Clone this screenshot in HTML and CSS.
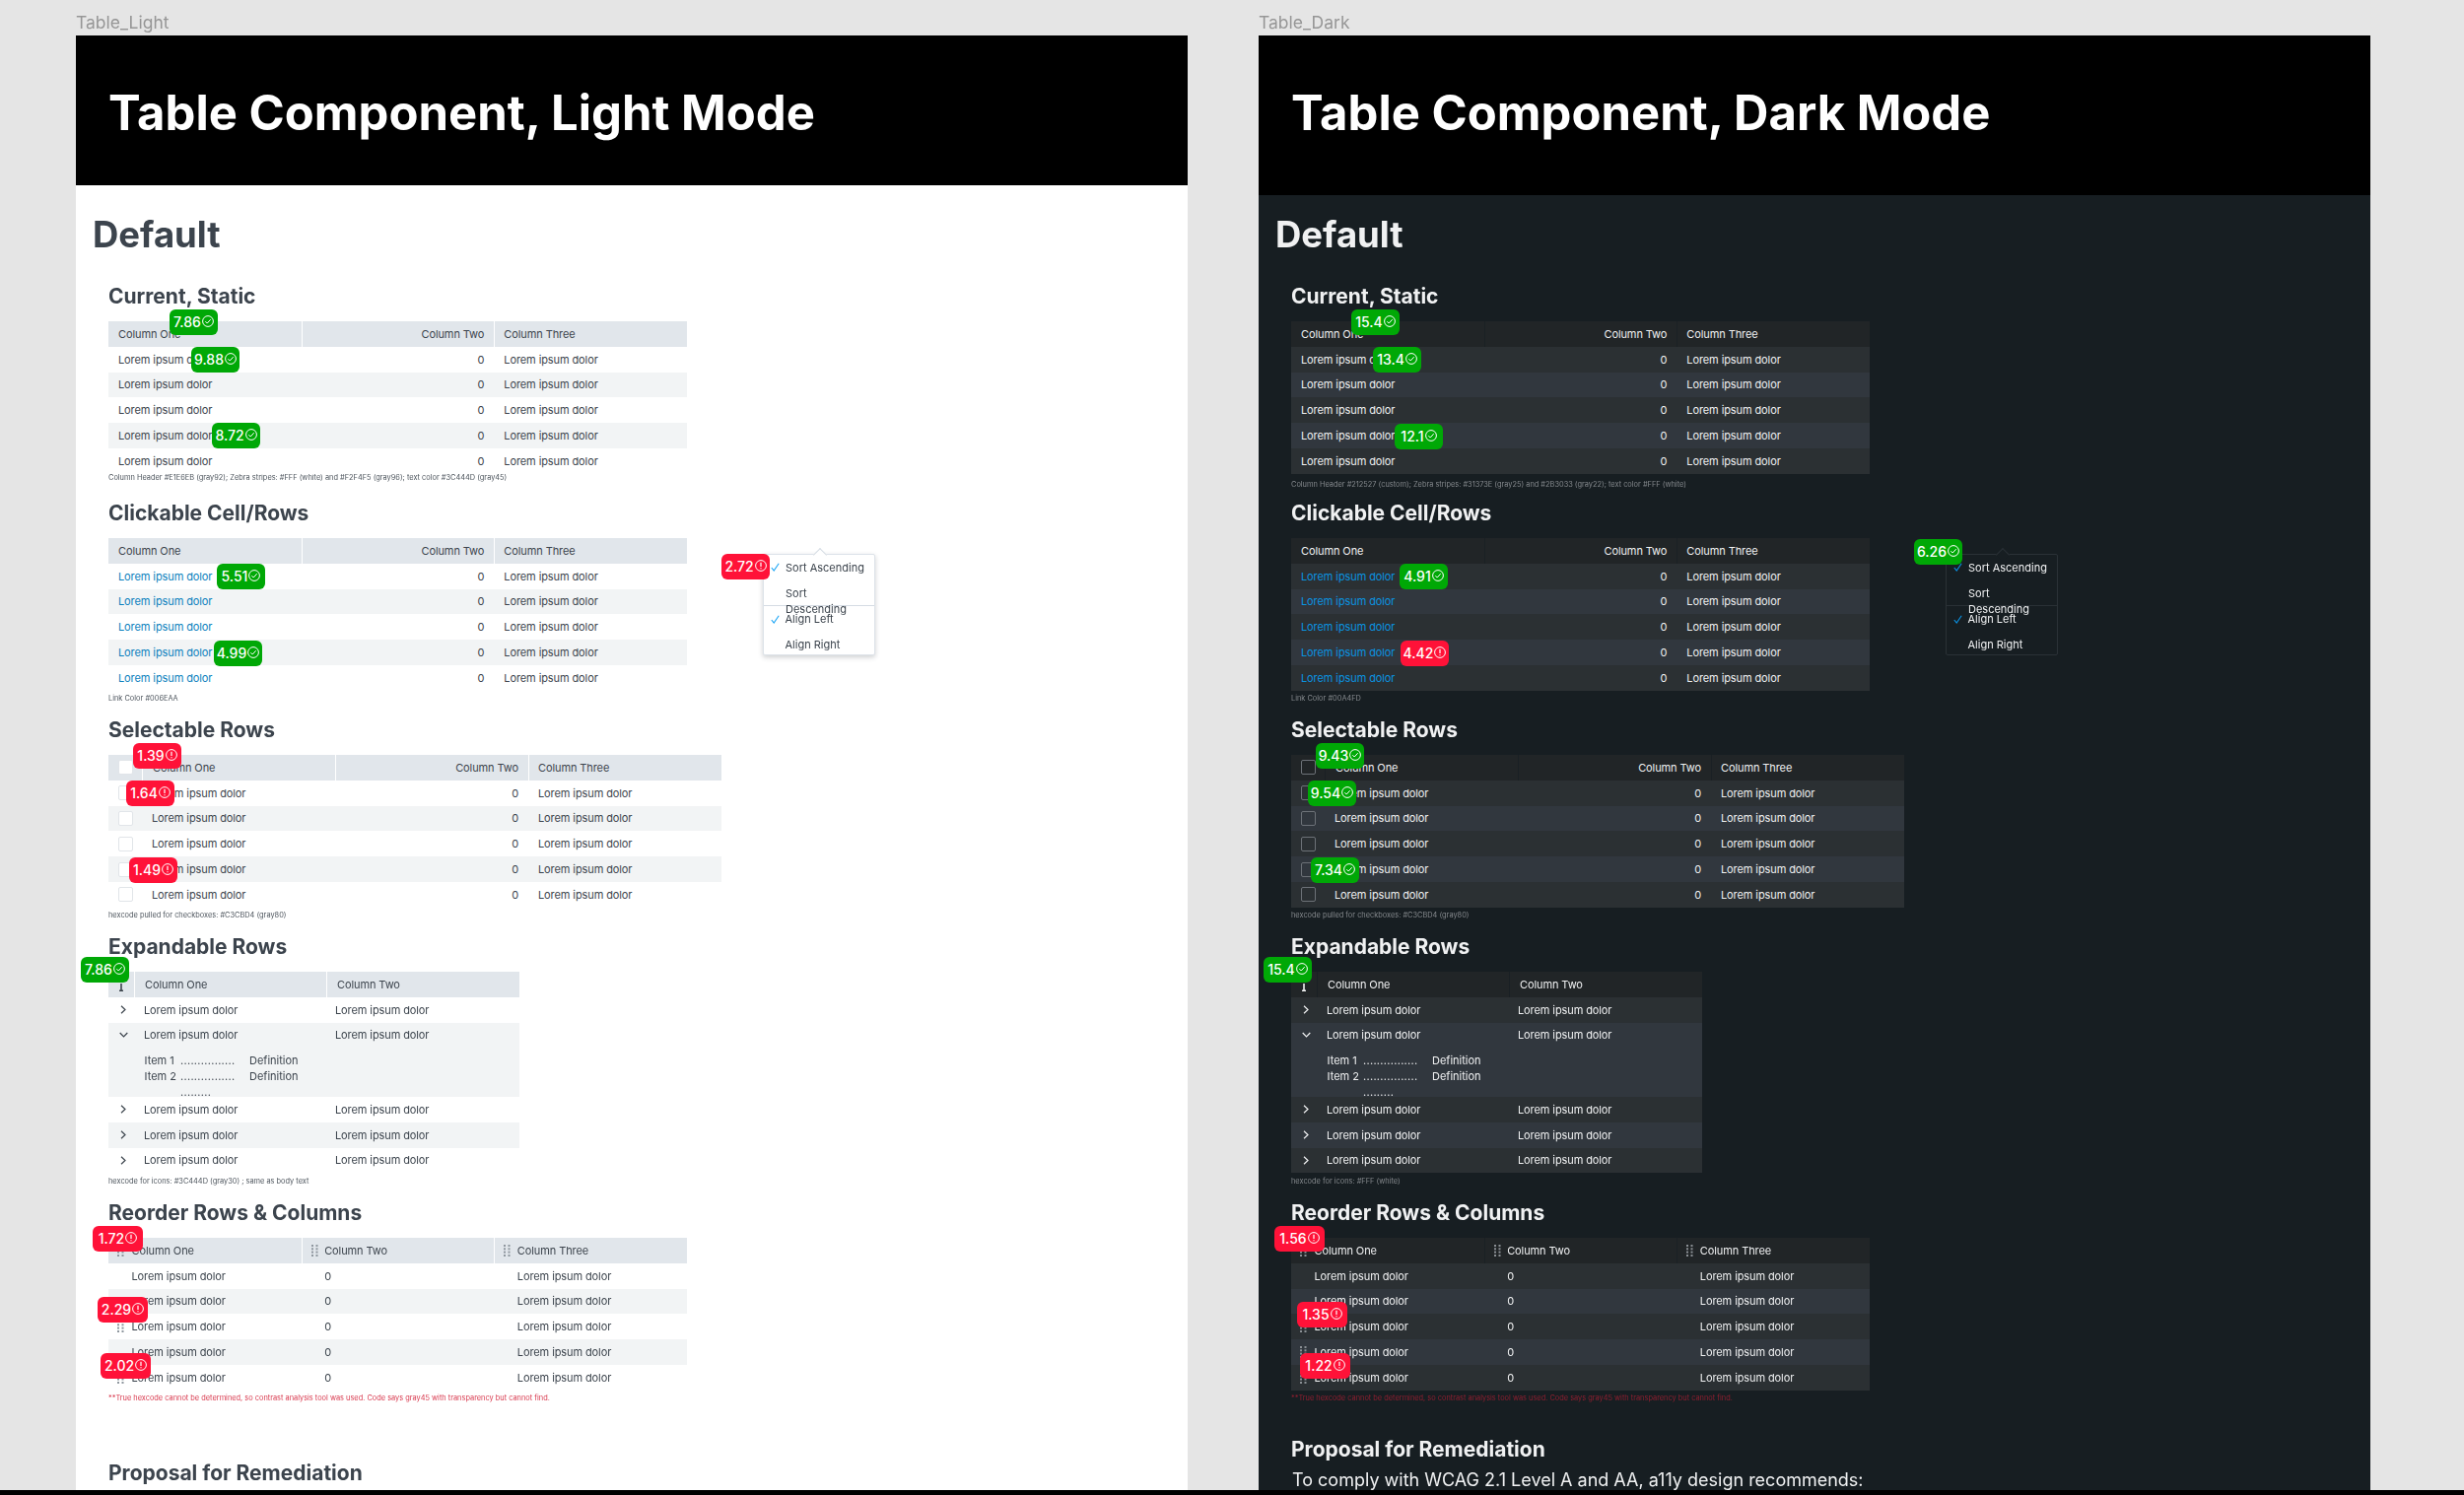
FILE: index.html
```html
<!DOCTYPE html>
<html lang="en">
<head>
<meta charset="utf-8">
<title>Table Component</title>
<link rel="stylesheet" href="styles.css">
</head>
<body>
<svg class="defs" width="0" height="0" aria-hidden="true">
  <symbol id="ok" viewBox="0 0 12 12"><circle cx="6" cy="6" r="5.4" fill="none" stroke="currentColor"/><path d="M3.4 6.2 5.2 8 8.7 4.2" fill="none" stroke="currentColor"/></symbol>
  <symbol id="bad" viewBox="0 0 12 12"><circle cx="6" cy="6" r="5.4" fill="none" stroke="currentColor"/><path d="M6 2.8V7M6 8.2V9.2" fill="none" stroke="currentColor" stroke-width="1.2"/></symbol>
  <symbol id="grip" viewBox="0 0 7 12"><g fill="currentColor"><rect x="0" y="0" width="2" height="2"/><rect x="4.5" y="0" width="2" height="2"/><rect x="0" y="3.3" width="2" height="2"/><rect x="4.5" y="3.3" width="2" height="2"/><rect x="0" y="6.6" width="2" height="2"/><rect x="4.5" y="6.6" width="2" height="2"/><rect x="0" y="10" width="2" height="2"/><rect x="4.5" y="10" width="2" height="2"/></g></symbol>
  <symbol id="right" viewBox="0 0 6 9"><path d="M1 .7 5 4.5 1 8.3" fill="none" stroke="currentColor" stroke-width="1.2"/></symbol>
  <symbol id="down" viewBox="0 0 9 6"><path d="M.7 1 4.5 5 8.3 1" fill="none" stroke="currentColor" stroke-width="1.2"/></symbol>
  <symbol id="tick" viewBox="0 0 9 9"><path d="M.8 5 3.2 8 8.2 .8" fill="none" stroke="currentColor" stroke-width="1.1"/></symbol>
  <symbol id="stem" viewBox="0 0 6 8"><path d="M3 0V7M1 7.3H5" fill="none" stroke="currentColor" stroke-width="1.6"/></symbol>
</svg>

<main class="canvas">

  <section class="board">
    <div class="board-label">Table_Light</div>
    <div class="frame light">
      <header class="banner"><h1 class="banner-title">Table Component, Light Mode</h1></header>
      <div class="content">
        <h2 class="page-title">Default</h2>

        <section class="sec">
          <h3 class="sec-title">Current, Static</h3>
          <div class="tbl t-three">
            <div class="row head"><div class="c">Column One</div><div class="c num">Column Two</div><div class="c">Column Three</div></div>
            <div class="row"><div class="c">Lorem ipsum dolor</div><div class="c num">0</div><div class="c">Lorem ipsum dolor</div></div>
            <div class="row alt"><div class="c">Lorem ipsum dolor</div><div class="c num">0</div><div class="c">Lorem ipsum dolor</div></div>
            <div class="row"><div class="c">Lorem ipsum dolor</div><div class="c num">0</div><div class="c">Lorem ipsum dolor</div></div>
            <div class="row alt"><div class="c">Lorem ipsum dolor</div><div class="c num">0</div><div class="c">Lorem ipsum dolor</div></div>
            <div class="row"><div class="c">Lorem ipsum dolor</div><div class="c num">0</div><div class="c">Lorem ipsum dolor</div></div>
          </div>
          <p class="note note-tight">Column Header #E1E6EB (gray92); Zebra stripes: #FFF (white) and #F2F4F5 (gray96); text color #3C444D (gray45)</p>
        </section>

        <section class="sec">
          <h3 class="sec-title">Clickable Cell/Rows</h3>
          <div class="tbl t-three">
            <div class="row head"><div class="c">Column One</div><div class="c num">Column Two</div><div class="c">Column Three</div></div>
            <div class="row"><div class="c"><a class="lnk">Lorem ipsum dolor</a></div><div class="c num">0</div><div class="c">Lorem ipsum dolor</div></div>
            <div class="row alt"><div class="c"><a class="lnk">Lorem ipsum dolor</a></div><div class="c num">0</div><div class="c">Lorem ipsum dolor</div></div>
            <div class="row"><div class="c"><a class="lnk">Lorem ipsum dolor</a></div><div class="c num">0</div><div class="c">Lorem ipsum dolor</div></div>
            <div class="row alt"><div class="c"><a class="lnk">Lorem ipsum dolor</a></div><div class="c num">0</div><div class="c">Lorem ipsum dolor</div></div>
            <div class="row"><div class="c"><a class="lnk">Lorem ipsum dolor</a></div><div class="c num">0</div><div class="c">Lorem ipsum dolor</div></div>
          </div>
          <p class="note">Link Color #006EAA</p>
        </section>

        <section class="sec">
          <h3 class="sec-title">Selectable Rows</h3>
          <div class="tbl t-select">
            <div class="row head"><div class="c box-cell"><span class="box"></span></div><div class="c">Column One</div><div class="c num">Column Two</div><div class="c">Column Three</div></div>
            <div class="row"><div class="c box-cell"><span class="box"></span></div><div class="c">Lorem ipsum dolor</div><div class="c num">0</div><div class="c">Lorem ipsum dolor</div></div>
            <div class="row alt"><div class="c box-cell"><span class="box"></span></div><div class="c">Lorem ipsum dolor</div><div class="c num">0</div><div class="c">Lorem ipsum dolor</div></div>
            <div class="row"><div class="c box-cell"><span class="box"></span></div><div class="c">Lorem ipsum dolor</div><div class="c num">0</div><div class="c">Lorem ipsum dolor</div></div>
            <div class="row alt"><div class="c box-cell"><span class="box"></span></div><div class="c">Lorem ipsum dolor</div><div class="c num">0</div><div class="c">Lorem ipsum dolor</div></div>
            <div class="row"><div class="c box-cell"><span class="box"></span></div><div class="c">Lorem ipsum dolor</div><div class="c num">0</div><div class="c">Lorem ipsum dolor</div></div>
          </div>
          <p class="note">hexcode pulled for checkboxes: #C3CBD4 (gray80)</p>
        </section>

        <section class="sec">
          <h3 class="sec-title">Expandable Rows</h3>
          <div class="tbl t-expand">
            <div class="row head"><div class="c icon-cell"><svg class="stem"><use href="#stem"/></svg></div><div class="c">Column One</div><div class="c">Column Two</div></div>
            <div class="row"><div class="c icon-cell"><svg class="chev-r"><use href="#right"/></svg></div><div class="c">Lorem ipsum dolor</div><div class="c cell-tight">Lorem ipsum dolor</div></div>
            <div class="expanded">
              <div class="row alt"><div class="c icon-cell"><svg class="chev-d"><use href="#down"/></svg></div><div class="c">Lorem ipsum dolor</div><div class="c cell-tight">Lorem ipsum dolor</div></div>
              <dl class="defs-list">
                <dt>Item 1</dt><dd class="dots">................</dd><dd>Definition</dd>
                <dt>Item 2</dt><dd class="dots">................<br>.........</dd><dd>Definition</dd>
              </dl>
            </div>
            <div class="row"><div class="c icon-cell"><svg class="chev-r"><use href="#right"/></svg></div><div class="c">Lorem ipsum dolor</div><div class="c cell-tight">Lorem ipsum dolor</div></div>
            <div class="row alt"><div class="c icon-cell"><svg class="chev-r"><use href="#right"/></svg></div><div class="c">Lorem ipsum dolor</div><div class="c cell-tight">Lorem ipsum dolor</div></div>
            <div class="row"><div class="c icon-cell"><svg class="chev-r"><use href="#right"/></svg></div><div class="c">Lorem ipsum dolor</div><div class="c cell-tight">Lorem ipsum dolor</div></div>
          </div>
          <p class="note">hexcode for icons: #3C444D (gray30) ; same as body text</p>
        </section>

        <section class="sec sec-reorder">
          <h3 class="sec-title">Reorder Rows &amp; Columns</h3>
          <div class="tbl t-three t-reorder">
            <div class="row head"><div class="c"><svg class="grip"><use href="#grip"/></svg>Column One</div><div class="c"><svg class="grip"><use href="#grip"/></svg>Column Two</div><div class="c"><svg class="grip"><use href="#grip"/></svg>Column Three</div></div>
            <div class="row"><div class="c">Lorem ipsum dolor</div><div class="c">0</div><div class="c">Lorem ipsum dolor</div></div>
            <div class="row alt"><div class="c">Lorem ipsum dolor</div><div class="c">0</div><div class="c">Lorem ipsum dolor</div></div>
            <div class="row"><div class="c"><svg class="grip"><use href="#grip"/></svg>Lorem ipsum dolor</div><div class="c">0</div><div class="c">Lorem ipsum dolor</div></div>
            <div class="row alt"><div class="c">Lorem ipsum dolor</div><div class="c">0</div><div class="c">Lorem ipsum dolor</div></div>
            <div class="row"><div class="c"><svg class="grip"><use href="#grip"/></svg>Lorem ipsum dolor</div><div class="c">0</div><div class="c">Lorem ipsum dolor</div></div>
          </div>
          <p class="note note-red">**True hexcode cannot be determined, so contrast analysis tool was used. Code says gray45 with transparency but cannot find.</p>
        </section>

        <section class="sec-last">
          <h3 class="sec-title">Proposal for Remediation</h3>
        </section>
      </div>

      <div class="menu">
        <div class="menu-group">
          <div class="menu-item"><svg class="tick"><use href="#tick"/></svg><span>Sort Ascending</span></div>
          <div class="menu-item"><span class="menu-slot"></span><span>Sort Descending</span></div>
        </div>
        <div class="menu-group menu-group-b">
          <div class="menu-item"><svg class="tick"><use href="#tick"/></svg><span>Align Left</span></div>
          <div class="menu-item"><span class="menu-slot"></span><span>Align Right</span></div>
        </div>
      </div>

      <div class="badge pass l1">7.86<svg class="b-icon"><use href="#ok"/></svg></div>
      <div class="badge pass l2">9.88<svg class="b-icon"><use href="#ok"/></svg></div>
      <div class="badge pass l3">8.72<svg class="b-icon"><use href="#ok"/></svg></div>
      <div class="badge pass l4">5.51<svg class="b-icon"><use href="#ok"/></svg></div>
      <div class="badge pass l5">4.99<svg class="b-icon"><use href="#ok"/></svg></div>
      <div class="badge fail l6">2.72<svg class="b-icon"><use href="#bad"/></svg></div>
      <div class="badge fail l7">1.39<svg class="b-icon"><use href="#bad"/></svg></div>
      <div class="badge fail l8">1.64<svg class="b-icon"><use href="#bad"/></svg></div>
      <div class="badge fail l9">1.49<svg class="b-icon"><use href="#bad"/></svg></div>
      <div class="badge pass l10">7.86<svg class="b-icon"><use href="#ok"/></svg></div>
      <div class="badge fail wide l11">1.72<svg class="b-icon"><use href="#bad"/></svg></div>
      <div class="badge fail wide l12">2.29<svg class="b-icon"><use href="#bad"/></svg></div>
      <div class="badge fail wide l13">2.02<svg class="b-icon"><use href="#bad"/></svg></div>
    </div>
  </section>

  <section class="board">
    <div class="board-label">Table_Dark</div>
    <div class="frame dark">
      <header class="banner"><h1 class="banner-title">Table Component, Dark Mode</h1></header>
      <div class="content">
        <h2 class="page-title">Default</h2>

        <section class="sec">
          <h3 class="sec-title">Current, Static</h3>
          <div class="tbl t-three">
            <div class="row head"><div class="c">Column One</div><div class="c num">Column Two</div><div class="c">Column Three</div></div>
            <div class="row"><div class="c">Lorem ipsum dolor</div><div class="c num">0</div><div class="c">Lorem ipsum dolor</div></div>
            <div class="row alt"><div class="c">Lorem ipsum dolor</div><div class="c num">0</div><div class="c">Lorem ipsum dolor</div></div>
            <div class="row"><div class="c">Lorem ipsum dolor</div><div class="c num">0</div><div class="c">Lorem ipsum dolor</div></div>
            <div class="row alt"><div class="c">Lorem ipsum dolor</div><div class="c num">0</div><div class="c">Lorem ipsum dolor</div></div>
            <div class="row"><div class="c">Lorem ipsum dolor</div><div class="c num">0</div><div class="c">Lorem ipsum dolor</div></div>
          </div>
          <p class="note">Column Header #212527 (custom); Zebra stripes: #31373E (gray25) and #2B3033 (gray22); text color #FFF (white)</p>
        </section>

        <section class="sec">
          <h3 class="sec-title">Clickable Cell/Rows</h3>
          <div class="tbl t-three">
            <div class="row head"><div class="c">Column One</div><div class="c num">Column Two</div><div class="c">Column Three</div></div>
            <div class="row"><div class="c"><a class="lnk">Lorem ipsum dolor</a></div><div class="c num">0</div><div class="c">Lorem ipsum dolor</div></div>
            <div class="row alt"><div class="c"><a class="lnk">Lorem ipsum dolor</a></div><div class="c num">0</div><div class="c">Lorem ipsum dolor</div></div>
            <div class="row"><div class="c"><a class="lnk">Lorem ipsum dolor</a></div><div class="c num">0</div><div class="c">Lorem ipsum dolor</div></div>
            <div class="row alt"><div class="c"><a class="lnk">Lorem ipsum dolor</a></div><div class="c num">0</div><div class="c">Lorem ipsum dolor</div></div>
            <div class="row"><div class="c"><a class="lnk">Lorem ipsum dolor</a></div><div class="c num">0</div><div class="c">Lorem ipsum dolor</div></div>
          </div>
          <p class="note">Link Color #00A4FD</p>
        </section>

        <section class="sec">
          <h3 class="sec-title">Selectable Rows</h3>
          <div class="tbl t-select">
            <div class="row head"><div class="c box-cell"><span class="box"></span></div><div class="c">Column One</div><div class="c num">Column Two</div><div class="c">Column Three</div></div>
            <div class="row"><div class="c box-cell"><span class="box"></span></div><div class="c">Lorem ipsum dolor</div><div class="c num">0</div><div class="c">Lorem ipsum dolor</div></div>
            <div class="row alt"><div class="c box-cell"><span class="box"></span></div><div class="c">Lorem ipsum dolor</div><div class="c num">0</div><div class="c">Lorem ipsum dolor</div></div>
            <div class="row"><div class="c box-cell"><span class="box"></span></div><div class="c">Lorem ipsum dolor</div><div class="c num">0</div><div class="c">Lorem ipsum dolor</div></div>
            <div class="row alt"><div class="c box-cell"><span class="box"></span></div><div class="c">Lorem ipsum dolor</div><div class="c num">0</div><div class="c">Lorem ipsum dolor</div></div>
            <div class="row"><div class="c box-cell"><span class="box"></span></div><div class="c">Lorem ipsum dolor</div><div class="c num">0</div><div class="c">Lorem ipsum dolor</div></div>
          </div>
          <p class="note">hexcode pulled for checkboxes: #C3CBD4 (gray80)</p>
        </section>

        <section class="sec">
          <h3 class="sec-title">Expandable Rows</h3>
          <div class="tbl t-expand">
            <div class="row head"><div class="c icon-cell"><svg class="stem"><use href="#stem"/></svg></div><div class="c">Column One</div><div class="c">Column Two</div></div>
            <div class="row"><div class="c icon-cell"><svg class="chev-r"><use href="#right"/></svg></div><div class="c">Lorem ipsum dolor</div><div class="c cell-tight">Lorem ipsum dolor</div></div>
            <div class="expanded">
              <div class="row alt"><div class="c icon-cell"><svg class="chev-d"><use href="#down"/></svg></div><div class="c">Lorem ipsum dolor</div><div class="c cell-tight">Lorem ipsum dolor</div></div>
              <dl class="defs-list">
                <dt>Item 1</dt><dd class="dots">................</dd><dd>Definition</dd>
                <dt>Item 2</dt><dd class="dots">................<br>.........</dd><dd>Definition</dd>
              </dl>
            </div>
            <div class="row"><div class="c icon-cell"><svg class="chev-r"><use href="#right"/></svg></div><div class="c">Lorem ipsum dolor</div><div class="c cell-tight">Lorem ipsum dolor</div></div>
            <div class="row alt"><div class="c icon-cell"><svg class="chev-r"><use href="#right"/></svg></div><div class="c">Lorem ipsum dolor</div><div class="c cell-tight">Lorem ipsum dolor</div></div>
            <div class="row"><div class="c icon-cell"><svg class="chev-r"><use href="#right"/></svg></div><div class="c">Lorem ipsum dolor</div><div class="c cell-tight">Lorem ipsum dolor</div></div>
          </div>
          <p class="note">hexcode for icons: #FFF (white)</p>
        </section>

        <section class="sec sec-reorder">
          <h3 class="sec-title">Reorder Rows &amp; Columns</h3>
          <div class="tbl t-three t-reorder">
            <div class="row head"><div class="c"><svg class="grip"><use href="#grip"/></svg>Column One</div><div class="c"><svg class="grip"><use href="#grip"/></svg>Column Two</div><div class="c"><svg class="grip"><use href="#grip"/></svg>Column Three</div></div>
            <div class="row"><div class="c">Lorem ipsum dolor</div><div class="c">0</div><div class="c">Lorem ipsum dolor</div></div>
            <div class="row alt"><div class="c">Lorem ipsum dolor</div><div class="c">0</div><div class="c">Lorem ipsum dolor</div></div>
            <div class="row"><div class="c"><svg class="grip"><use href="#grip"/></svg>Lorem ipsum dolor</div><div class="c">0</div><div class="c">Lorem ipsum dolor</div></div>
            <div class="row alt"><div class="c"><svg class="grip"><use href="#grip"/></svg>Lorem ipsum dolor</div><div class="c">0</div><div class="c">Lorem ipsum dolor</div></div>
            <div class="row"><div class="c"><svg class="grip"><use href="#grip"/></svg>Lorem ipsum dolor</div><div class="c">0</div><div class="c">Lorem ipsum dolor</div></div>
          </div>
          <p class="note note-red">**True hexcode cannot be determined, so contrast analysis tool was used. Code says gray45 with transparency but cannot find.</p>
        </section>

        <section class="sec-last">
          <h3 class="sec-title">Proposal for Remediation</h3>
          <p class="lead">To comply with WCAG 2.1 Level A and AA, a11y design recommends:</p>
        </section>
      </div>

      <div class="menu">
        <div class="menu-group">
          <div class="menu-item"><svg class="tick"><use href="#tick"/></svg><span>Sort Ascending</span></div>
          <div class="menu-item"><span class="menu-slot"></span><span>Sort Descending</span></div>
        </div>
        <div class="menu-group menu-group-b">
          <div class="menu-item"><svg class="tick"><use href="#tick"/></svg><span>Align Left</span></div>
          <div class="menu-item"><span class="menu-slot"></span><span>Align Right</span></div>
        </div>
      </div>

      <div class="badge pass d1">15.4<svg class="b-icon"><use href="#ok"/></svg></div>
      <div class="badge pass d2">13.4<svg class="b-icon"><use href="#ok"/></svg></div>
      <div class="badge pass d3">12.1<svg class="b-icon"><use href="#ok"/></svg></div>
      <div class="badge pass d4">6.26<svg class="b-icon"><use href="#ok"/></svg></div>
      <div class="badge pass d5">4.91<svg class="b-icon"><use href="#ok"/></svg></div>
      <div class="badge fail d6">4.42<svg class="b-icon"><use href="#bad"/></svg></div>
      <div class="badge pass d7">9.43<svg class="b-icon"><use href="#ok"/></svg></div>
      <div class="badge pass d8">9.54<svg class="b-icon"><use href="#ok"/></svg></div>
      <div class="badge pass d9">7.34<svg class="b-icon"><use href="#ok"/></svg></div>
      <div class="badge pass d10">15.4<svg class="b-icon"><use href="#ok"/></svg></div>
      <div class="badge fail wide d11">1.56<svg class="b-icon"><use href="#bad"/></svg></div>
      <div class="badge fail wide d12">1.35<svg class="b-icon"><use href="#bad"/></svg></div>
      <div class="badge fail wide d13">1.22<svg class="b-icon"><use href="#bad"/></svg></div>
    </div>
  </section>

</main>
<div class="app-edge"></div>
</body>
</html>
```

FILE: styles.css
```css
* { box-sizing: border-box; }

html, body {
  margin: 0;
  height: 1517px;
  overflow: hidden;
}

body {
  display: flex;
  flex-direction: column;
  background: #e5e5e5;
  font-family: Inter, "Liberation Sans", sans-serif;
  font-size: 11px;
}

.defs { position: absolute; }

.canvas {
  flex: 1;
  min-height: 0;
  display: flex;
  gap: 72px;
  padding-left: 77px;
  filter: blur(.35px);
}

.app-edge {
  height: 5px;
  background: #000;
}

.board {
  display: flex;
  flex-direction: column;
  width: 1128px;
  min-height: 0;
}

.board-label {
  height: 36px;
  padding-top: 14px;
  font-size: 17.5px;
  line-height: 18px;
  color: #969696;
}

.frame {
  position: relative;
  flex: 1;
  min-height: 0;
  overflow: hidden;
  background: var(--page);
  color: var(--text);
}

.light {
  --page: #fff;
  --text: #3c444d;
  --head: #e1e6eb;
  --alt: #f2f4f5;
  --row: #fff;
  --sep: #fff;
  --link: #0a7fbd;
  --note: #4d555d;
  --red: #d8394e;
  --box: #e1e5e9;
  --grip: #8f979f;
  --tick: #1ba5f5;
  --menu-line: #d5dce3;
  --banner: 152px;
  --top-pad: 30px;
  --last: 264px;
}

.dark {
  --page: #171e22;
  --text: #f0f1f2;
  --head: #212527;
  --alt: #31373e;
  --row: #2b3033;
  --sep: #1a2024;
  --link: #0a93e0;
  --note: #85898d;
  --red: #8f1f30;
  --box: #6c7177;
  --grip: #8a8f94;
  --tick: #0a93e6;
  --menu-line: #2a3136;
  --banner: 162px;
  --top-pad: 20px;
  --last: 240px;
}

.banner {
  height: var(--banner);
  padding: 50px 0 0 33px;
  background: #000;
  color: #fff;
}

.banner-title {
  margin: 0;
  font-size: 49px;
  line-height: 58px;
  font-weight: 700;
}

.content {
  padding: var(--top-pad) 0 0 17px;
}

.page-title {
  margin: 0 0 29px;
  font-size: 36.5px;
  line-height: 40px;
  font-weight: 700;
}

.sec,
.sec-last {
  padding-left: 16px;
}

.sec { height: 220px; }
.sec-reorder { height: var(--last); }
.sec:nth-of-type(4) { height: 270px; }

.sec-title {
  margin: 0 0 13px;
  font-size: 21px;
  line-height: 27px;
  font-weight: 700;
}

.tbl { position: relative; margin-top: -1px; }
.t-three  { width: 587px; --cols: 195.67px 195.67px 195.66px; }
.t-select { width: 622px; --cols: 34px 196px 196px 196px; }
.t-expand { width: 417px; --cols: 26px 195px 196px; }

.row {
  display: grid;
  grid-template-columns: var(--cols);
  height: 25.8px;
  background: var(--row);
}

.row.alt { background: var(--alt); }
.row.head { background: var(--head); }

.c {
  display: flex;
  align-items: center;
  padding: 0 10px;
  font-size: 11px;
  letter-spacing: -.1px;
  line-height: 16px;
  white-space: nowrap;
}

.num { justify-content: flex-end; }
.cell-tight { padding-left: 9px; }
.row.head .c + .c { border-left: 1px solid var(--sep); padding-left: 9px; }
.t-expand .row.head .c + .c { padding-left: 10px; }
.t-select .row.head .box-cell + .c { padding-left: 10px; }

.lnk { color: var(--link); }

.box-cell { padding: 0 0 0 9.5px; }

.box {
  width: 15px;
  height: 15px;
  border: 1px solid var(--box);
  border-radius: 2px;
}

.light .box { background: #fff; }

.icon-cell { padding: 0 0 0 12px; }
.row.head .icon-cell { padding-left: 10px; }

.chev-r { width: 6px; height: 9px; }
.chev-d { width: 9px; height: 6px; margin-left: -1px; }
.stem   { width: 6px; height: 8px; margin-top: 6px; }

.expanded {
  height: 75.4px;
  background: var(--alt);
}

.defs-list {
  display: grid;
  grid-template-columns: 36.4px 70px auto;
  grid-auto-rows: 16px;
  margin: 5px 0 0 36.6px;
  font-size: 11px;
  line-height: 16px;
}

.defs-list dt,
.defs-list dd { margin: 0; }

.dots {
  letter-spacing: .3px;
  white-space: nowrap;
}

.t-reorder .row .c { padding-left: 23.5px; position: relative; }
.t-reorder .row.head .c + .c { padding-left: 22.5px; }

.grip {
  position: absolute;
  left: 9px;
  top: 7px;
  width: 7px;
  height: 12px;
  color: var(--grip);
}

.note {
  margin: 3.7px 0 0;
  font-size: 7.4px;
  line-height: 10px;
  color: var(--note);
  white-space: nowrap;
}

.note-tight { margin-top: -0.8px; }
.dark .sec:nth-of-type(1) .note { margin-top: 6px; }
.note-red { color: var(--red); }

.lead {
  margin: -8px 0 0 1px;
  font-size: 18px;
  line-height: 26px;
}

/* Overlay: column menu */
.menu {
  position: absolute;
  left: 697px;
  top: 526px;
  width: 114px;
  height: 103px;
  background: var(--page);
  border: 1px solid var(--menu-line);
  border-radius: 2px;
}

.light .menu { box-shadow: 0 2px 5px rgba(60, 68, 77, .25); border-color: #dde3e9; }

.menu::before {
  content: "";
  position: absolute;
  left: 52px;
  top: -5px;
  width: 9px;
  height: 9px;
  background: var(--page);
  border: solid var(--menu-line);
  border-width: 1px 0 0 1px;
  transform: rotate(45deg);
}

.menu-group {
  position: relative;
  height: 52px;
  border-bottom: 1px solid var(--menu-line);
}

.menu-group-b { border-bottom: 0; }

.menu-item {
  display: flex;
  height: 26px;
  padding: 4.5px 10px 0 7px;
  font-size: 11px;
  line-height: 16px;
}

.menu-group-b .menu-item { margin-left: -.5px; }

.tick {
  flex: none;
  width: 9px;
  height: 9px;
  margin: 3px 6px 0 0;
  color: var(--tick);
}

.menu-group-b .tick { margin-top: 4px; }

.menu-slot { flex: none; width: 15px; }

/* Overlay: contrast badges */
.badge {
  position: absolute;
  display: flex;
  align-items: center;
  justify-content: center;
  gap: 1px;
  width: 49px;
  height: 25.7px;
  border-radius: 6px;
  font-size: 14px;
  line-height: 16px;
  font-weight: 500;
  color: #fff;
}

.badge.wide { width: 51px; }
.pass { background: #00a806; }
.fail { background: #ff1238; }
.b-icon { width: 12px; height: 12px; margin-top: -2px; }

.l1 { left: 95px; top: 278px; }
.l2 { left: 117px; top: 316px; }
.l3 { left: 138px; top: 393px; }
.l4 { left: 143px; top: 536px; }
.l5 { left: 140px; top: 614px; }
.l6 { left: 655px; top: 526px; }
.l7 { left: 58px; top: 718px; }
.l8 { left: 51px; top: 756px; }
.l9 { left: 54px; top: 834px; }
.l10 { left: 5px; top: 935px; }
.l11 { left: 17px; top: 1208px; }
.l12 { left: 22px; top: 1280px; }
.l13 { left: 25px; top: 1337px; }

.d1 { left: 94px; top: 278px; }
.d2 { left: 116px; top: 316px; }
.d3 { left: 138px; top: 394px; }
.d4 { left: 665px; top: 511px; }
.d5 { left: 143px; top: 536px; }
.d6 { left: 144px; top: 614px; }
.d7 { left: 58px; top: 718px; }
.d8 { left: 50px; top: 756px; }
.d9 { left: 53px; top: 834px; }
.d10 { left: 5px; top: 935px; }
.d11 { left: 16px; top: 1208px; }
.d12 { left: 39px; top: 1285px; }
.d13 { left: 42px; top: 1337px; }
```
